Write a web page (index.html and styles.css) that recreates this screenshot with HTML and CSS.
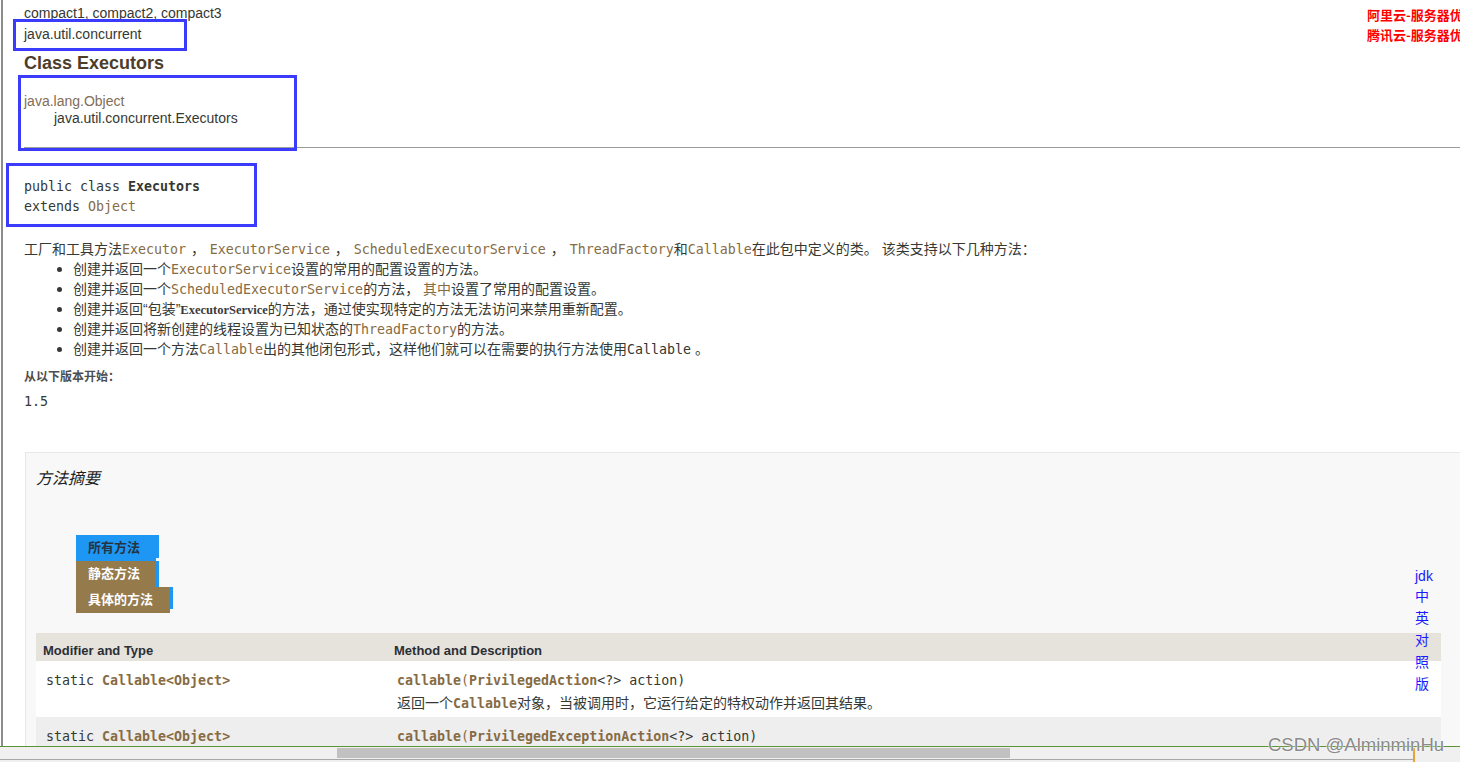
FILE: index.html
```html
<!DOCTYPE html>
<html lang="zh">
<head>
<meta charset="utf-8">
<title>Executors</title>
<link rel="stylesheet" href="styles.css">
</head>
<body>
<div class="page">
  <div class="frame">
    <div class="content">
      <div class="subTitle">compact1, compact2, compact3</div>
      <div class="subTitle pkg">java.util.concurrent</div>
      <h2 class="title">Class Executors</h2>
      <div class="inheritance">
        <div class="inh-root">java.lang.Object</div>
        <div class="inh-child">java.util.concurrent.Executors</div>
      </div>
      <hr class="rule">
      <div class="sig"><div>public class <b>Executors</b></div><div>extends <span class="lk">Object</span></div></div>
      <div class="block">工厂和工具方法<code class="lk">Executor</code><span class="sep"> ， </span><code class="lk">ExecutorService</code><span class="sep"> ， </span><code class="lk">ScheduledExecutorService</code><span class="sep"> ， </span><code class="lk">ThreadFactory</code>和<code class="lk">Callable</code>在此包中定义的类。 该类支持以下几种方法：</div>
      <ul class="list">
        <li>创建并返回一个<code class="lk">ExecutorService</code>设置的常用的配置设置的方法。</li>
        <li>创建并返回一个<code class="lk">ScheduledExecutorService</code>的方法， <span class="lkc">其中</span>设置了常用的配置设置。</li>
        <li>创建并返回“包装”<span class="serif">ExecutorService</span>的方法，通过使实现特定的方法无法访问来禁用重新配置。</li>
        <li>创建并返回将新创建的线程设置为已知状态的<code class="lk">ThreadFactory</code>的方法。</li>
        <li>创建并返回一个方法<code class="lk">Callable</code>出的其他闭包形式，这样他们就可以在需要的执行方法使用<code>Callable</code> 。</li>
      </ul>
      <dl class="since">
        <dt>从以下版本开始：</dt>
        <dd><code>1.5</code></dd>
      </dl>
      <div class="summary">
        <h3 class="sum-title">方法摘要</h3>
        <div class="tabs">
          <div class="tab"><span class="cap active w1">所有方法</span><span class="end e1"></span></div>
          <div class="tab"><span class="cap w1">静态方法</span><span class="end e2"></span></div>
          <div class="tab"><span class="cap w3">具体的方法</span><span class="end e3"></span></div>
        </div>
        <table class="mtable">
          <thead>
            <tr><th class="c1">Modifier and Type</th><th>Method and Description</th></tr>
          </thead>
          <tbody>
            <tr class="alt0">
              <td class="c1"><code>static <b class="lk">Callable&lt;Object&gt;</b></code></td>
              <td><div><code><b class="lk">callable</b><span class="lk">(</span><b class="lk">PrivilegedAction</b>&lt;?&gt; action)</code></div>
                  <div class="desc">返回一个<code><b class="lk">Callable</b></code>对象，当被调用时，它运行给定的特权动作并返回其结果。</div></td>
            </tr>
            <tr class="alt1">
              <td class="c1"><code>static <b class="lk">Callable&lt;Object&gt;</b></code></td>
              <td><div><code><b class="lk">callable</b><span class="lk">(</span><b class="lk">PrivilegedExceptionAction</b>&lt;?&gt; action)</code></div></td>
            </tr>
          </tbody>
        </table>
      </div>
    </div>
  </div>
  <div class="hscroll"><div class="thumb"></div><div class="mark"></div></div>

  <div class="mark-box b1"></div>
  <div class="mark-box b2"></div>
  <div class="mark-box b3"></div>

  <div class="ads">
    <a class="ad">阿里云-服务器优惠</a>
    <a class="ad">腾讯云-服务器优惠</a>
  </div>

  <div class="side">
    <a class="side-jdk">jdk</a>
    <a>中</a>
    <a>英</a>
    <a>对</a>
    <a>照</a>
    <a>版</a>
  </div>

  <div class="watermark">CSDN @AlminminHu</div>
</div>
</body>
</html>
```
FILE: styles.css
```css
html, body {
  margin: 0;
  padding: 0;
}
body {
  width: 1460px;
  height: 762px;
  overflow: hidden;
  background: #ffffff;
  color: #353833;
  font-family: "Liberation Sans", Arial, "Noto Sans CJK SC", sans-serif;
  font-size: 14px;
}
.page {
  position: relative;
  width: 1460px;
  height: 762px;
  overflow: hidden;
}
.frame {
  margin-left: 1px;
  border-left: 2px solid #8c8c8c;
  height: 746px;
  overflow: hidden;
}
.content {
  padding: 4px 0 0 21px;
}
code, .sig {
  font-family: "DejaVu Sans Mono", "Liberation Mono", "Noto Sans CJK SC", monospace;
  font-size: 13.3px;
}
code {
  line-height: 0;
}
.lk { color: #866b44; }
.lkc { color: #866b44; }
.sep { margin: 0 1px; }
.subTitle {
  line-height: 18px;
  white-space: nowrap;
}
.pkg { margin-top: 3px; }
.title {
  margin: 9px 0 0 0;
  font-size: 18px;
  line-height: 22px;
  font-weight: bold;
  color: #4d3d2a;
}
.inheritance {
  margin-top: 19px;
  line-height: 17px;
}
.inh-root { color: #826d57; }
.inh-child { padding-left: 30px; }
.rule {
  margin: 20px 0 0 0;
  border: 0;
  height: 1px;
  background: #9c9c9c;
}
.sig {
  margin-top: 29px;
  line-height: 20px;
}
.block {
  margin-top: 22px;
  line-height: 20px;
  white-space: nowrap;
}
.list {
  margin: 0;
  padding-left: 49px;
  line-height: 20px;
  white-space: nowrap;
}
.list li::marker {
  font-size: 16px;
}
.serif {
  font-family: "Liberation Serif", serif;
  font-size: 12.5px;
  line-height: 0;
  font-weight: bold;
  color: #3a3a3a;
}
.since {
  margin: 10px 0 0 0;
}
.since dt {
  font-size: 12px;
  font-weight: bold;
  line-height: 16px;
  color: #4e4e4e;
}
.since dd {
  margin: 7px 0 0 0;
  line-height: 18px;
}
.summary {
  margin: 42px 0 0 1px;
  width: 1440px;
  height: 400px;
  background: #f8f8f8;
  border: 1px solid #e8e8e8;
  padding: 15px 0 0 10px;
}
.sum-title {
  margin: 0;
  font-size: 16px;
  line-height: 22px;
  font-style: italic;
  font-weight: normal;
  color: #1e1e1e;
}
.tabs {
  margin: 45px 0 0 40px;
}
.tab {
  display: flex;
  align-items: flex-start;
}
.cap {
  display: block;
  box-sizing: border-box;
  height: 26px;
  line-height: 26px;
  padding-left: 12px;
  font-size: 13px;
  font-weight: bold;
  color: #ffffff;
  background: #957a4c;
  white-space: nowrap;
}
.cap.active {
  background: #1e97f4;
  color: #253441;
}
.w1 { width: 80px; }
.w3 { width: 94px; }
.end {
  display: block;
  width: 3px;
  background: #1e97f4;
}
.e1 { height: 23px; }
.e2 { height: 26px; }
.e3 { height: 22px; }
.mtable {
  margin-top: 20px;
  width: 1405px;
  border-collapse: collapse;
  table-layout: fixed;
}
.mtable th {
  background: #e6e2dc;
  text-align: left;
  font-size: 13px;
  font-weight: bold;
  line-height: 16px;
  padding: 10px 0 2px 7px;
  color: #2a2f35;
}
.mtable th.c1, .mtable td.c1 { width: 351px; box-sizing: border-box; }
.mtable td {
  vertical-align: top;
  line-height: 20px;
  padding: 9px 0 4px 10px;
  white-space: nowrap;
}
.desc { margin-top: 3px; }
.alt0 td { background: #ffffff; }
.alt1 td { background: #eeeeee; }
.hscroll {
  position: relative;
  height: 16px;
  border-top: 1px solid #5b9431;
  box-sizing: border-box;
  background: #f0f0f0;
}
.hscroll::after {
  content: "";
  position: absolute;
  left: 0;
  width: 1413px;
  top: 12px;
  height: 1px;
  background: #a8a8a8;
}
.thumb {
  position: absolute;
  left: 337px;
  top: 1px;
  width: 673px;
  height: 10px;
  background: #c1c1c1;
}
.mark {
  position: absolute;
  left: 1413px;
  top: 1px;
  width: 2px;
  height: 15px;
  background: #e3a336;
}
.mark-box {
  position: absolute;
  border: 3px solid #3b3bfb;
  box-sizing: border-box;
}
.b1 { left: 13px; top: 19px; width: 174px; height: 32px; }
.b2 { left: 18px; top: 75px; width: 279px; height: 76px; }
.b3 { left: 6px; top: 163px; width: 251px; height: 64px; }
.ads {
  position: absolute;
  left: 1367px;
  top: 5px;
  white-space: nowrap;
}
.ad {
  display: block;
  font-family: "Noto Sans CJK SC", sans-serif;
  font-size: 13px;
  line-height: 20px;
  font-weight: bold;
  color: #ff0000;
}
.side {
  position: absolute;
  left: 1415px;
  top: 568px;
  font-size: 14px;
  color: #1a1aff;
}
.side a {
  display: block;
  line-height: 22px;
}
.side a.side-jdk {
  line-height: 17px;
}
.watermark {
  position: absolute;
  left: 1268px;
  top: 734px;
  font-family: "Liberation Sans", Arial, sans-serif;
  font-size: 18.5px;
  line-height: 22px;
  color: #8a8a8a;
  white-space: nowrap;
  text-shadow: 0 0 2px #ffffff, 0 0 1px #ffffff;
}
```
